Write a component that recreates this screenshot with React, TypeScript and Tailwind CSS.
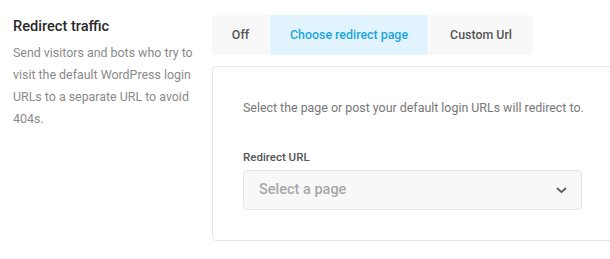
import React, { useState } from 'react';

const tabs = ['Off', 'Choose redirect page', 'Custom Url'];

const App: React.FC = () => {
  const [active, setActive] = useState('Choose redirect page');

  return (
    <div className="w-[610px] h-[259px] overflow-hidden bg-white flex font-['Roboto',sans-serif]">
      {/* Left: description */}
      <div className="w-[212px] shrink-0 pl-[13px] pr-[16px] pt-[15px]">
        <h3 className="text-[14.6px] leading-[22px] font-medium text-[#2a2a2a]">Redirect traffic</h3>
        <p className="mt-[5px] text-[12.4px] leading-[22px] text-[#8a8a8a]">
          Send visitors and bots who try to visit the default WordPress login URLs to a separate URL to avoid 404s.
        </p>
      </div>

      {/* Right: options */}
      <div className="pt-[15px] flex flex-col">
        <div className="flex w-fit rounded-[4px] overflow-hidden gap-[1px] bg-white">
          {tabs.map(t => (
            <button
              key={t}
              onClick={() => setActive(t)}
              className={`h-[40px] text-[12.4px] font-medium ${t === 'Off' ? 'w-[57px]' : t === 'Custom Url' ? 'w-[104px]' : 'w-[158px]'} ${active === t ? 'bg-[#e1f4fd] text-[#1ca6e0]' : 'bg-[#f8f8f8] text-[#555555]'}`}
            >
              {t}
            </button>
          ))}
        </div>

        <div className="mt-[11px] w-[420px] border border-[#e6e6e6] rounded-[4px] px-[30px] py-[30px]">
          <p className="text-[12.4px] leading-[22px] text-[#777777]">
            Select the page or post your default login URLs will redirect to.
          </p>
          <label className="block mt-[30px] text-[11.5px] leading-[16px] font-medium text-[#555555]">Redirect URL</label>
          <div className="mt-[5px] w-[339px] h-[40px] bg-[#f8f8f8] border border-[#e6e6e6] rounded-[4px] flex items-center justify-between pl-[15px] pr-[14px]">
            <span className="text-[14.5px] font-medium text-[#a8a8a8]">Select a page</span>
            <svg width="11" height="7" viewBox="0 0 11 7" fill="none">
              <path d="M1.5 1.5 L5.5 5.2 L9.5 1.5" stroke="#5a5a5a" strokeWidth="1.8" strokeLinecap="round" strokeLinejoin="round" />
            </svg>
          </div>
        </div>
      </div>
    </div>
  );
};

export default App;
